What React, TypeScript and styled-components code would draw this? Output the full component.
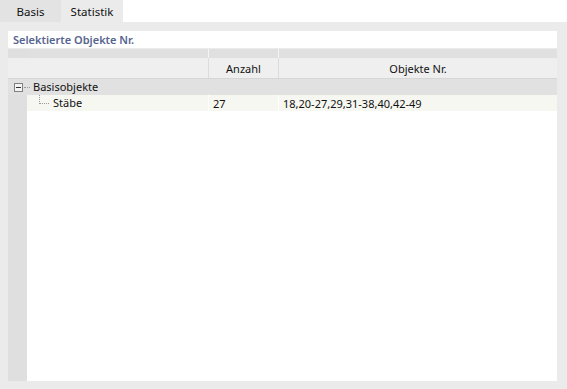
import styled, { createGlobalStyle } from "styled-components";

const GlobalStyle = createGlobalStyle`
  html, body {
    margin: 0;
    padding: 0;
    background: #fff;
  }
  body {
    font-family: "Noto Sans", "Open Sans", sans-serif;
    font-size: 11px;
    color: #111;
  }
`;

const Page = styled.div`
  width: 567px;
  height: 389px;
  display: flex;
  flex-direction: column;
`;

const TabBar = styled.div`
  display: flex;
  height: 22px;
  background: #fff;
`;

const Tab = styled.div<{ active?: boolean }>`
  width: ${(p) => (p.active ? "62px" : "61px")};
  display: flex;
  align-items: center;
  justify-content: center;
  background: ${(p) => (p.active ? "#ebebeb" : "#e3e3e3")};
  font-size: 11.5px;
  padding-top: 1px;
  box-sizing: border-box;
`;

const Panel = styled.div`
  flex: 1;
  background: #ebebeb;
  padding: 9px 10px 8px 8px;
  display: flex;
  flex-direction: column;
  min-height: 0;
`;

const TitleBox = styled.div`
  height: 17px;
  background: #fff;
  display: flex;
  align-items: center;
  padding-left: 5px;
  color: #56648f;
  font-weight: 600;
`;

const Table = styled.div`
  flex: 1;
  display: grid;
  grid-template-columns: 19px 181px 70px 1fr;
  grid-template-rows: 9px 20px 1px 16px 16px 1fr;
  background: #fff;
  margin-top: 1px;
`;

type Kind = "top" | "head" | "data" | "fill";

const cellBg: Record<Kind, string> = {
  top: "#e0e0e0",
  head: "#efefef",
  data: "#f7f7f1",
  fill: "#fff",
};

const sepColor: Record<Kind, string> = {
  top: "#f4f4f4",
  head: "#dcdcdc",
  data: "#fff",
  fill: "transparent",
};

const Gutter = styled.div<{ kind: Kind }>`
  background: ${(p) => (p.kind === "head" ? "#efefef" : "#dfdfdf")};
`;

const Cell = styled.div<{ kind: Kind; sep?: boolean; center?: boolean }>`
  background: ${(p) => cellBg[p.kind]};
  border-left: ${(p) => (p.sep ? `1px solid ${sepColor[p.kind]}` : "none")};
  display: flex;
  align-items: center;
  justify-content: ${(p) => (p.center ? "center" : "flex-start")};
  padding-left: ${(p) => (p.center ? "0" : "4px")};
  white-space: nowrap;
  overflow: hidden;
`;

const HeadLine = styled.div`
  grid-column: 1 / -1;
  background: #d6d6d6;
`;

const GroupRow = styled.div`
  grid-column: 1 / -1;
  background: #e1e1e1;
  display: flex;
  align-items: center;
  padding-left: 6px;
`;

const ExpandBox = styled.span`
  width: 9px;
  height: 9px;
  box-sizing: border-box;
  border: 1px solid #808080;
  background: #f4f4f4;
  position: relative;
  flex: none;

  &::after {
    content: "";
    position: absolute;
    left: 1px;
    right: 1px;
    top: 3px;
    height: 1px;
    background: #303030;
  }
`;

const HLine = styled.span<{ w: number }>`
  width: ${(p) => p.w}px;
  border-top: 1px dotted #9a9a9a;
  flex: none;
  align-self: center;
`;

const TreeCell = styled.div`
  background: #f7f7f1;
  display: flex;
  align-items: flex-start;
  padding-left: 12px;
`;

const Elbow = styled.span`
  width: 9px;
  height: 8px;
  border-left: 1px dotted #9a9a9a;
  border-bottom: 1px dotted #9a9a9a;
  flex: none;
`;

const Label = styled.span`
  margin-left: 3px;
  line-height: 16px;
`;

export default function App() {
  return (
    <>
      <GlobalStyle />
      <Page>
        <TabBar>
          <Tab>Basis</Tab>
          <Tab active>Statistik</Tab>
        </TabBar>
        <Panel>
          <TitleBox>Selektierte Objekte Nr.</TitleBox>
          <Table>
            <Gutter kind="top" />
            <Cell kind="top" />
            <Cell kind="top" sep />
            <Cell kind="top" sep />

            <Gutter kind="head" />
            <Cell kind="head" />
            <Cell kind="head" sep center>
              Anzahl
            </Cell>
            <Cell kind="head" sep center>
              Objekte Nr.
            </Cell>

            <HeadLine />

            <GroupRow>
              <ExpandBox />
              <HLine w={6} style={{ marginLeft: 1 }} />
              <Label>Basisobjekte</Label>
            </GroupRow>

            <Gutter kind="data" />
            <TreeCell>
              <Elbow />
              <Label style={{ marginLeft: 4 }}>Stäbe</Label>
            </TreeCell>
            <Cell kind="data" sep>
              27
            </Cell>
            <Cell kind="data" sep>
              18,20-27,29,31-38,40,42-49
            </Cell>

            <Gutter kind="fill" />
            <Cell kind="fill" />
            <Cell kind="fill" />
            <Cell kind="fill" />
          </Table>
        </Panel>
      </Page>
    </>
  );
}
